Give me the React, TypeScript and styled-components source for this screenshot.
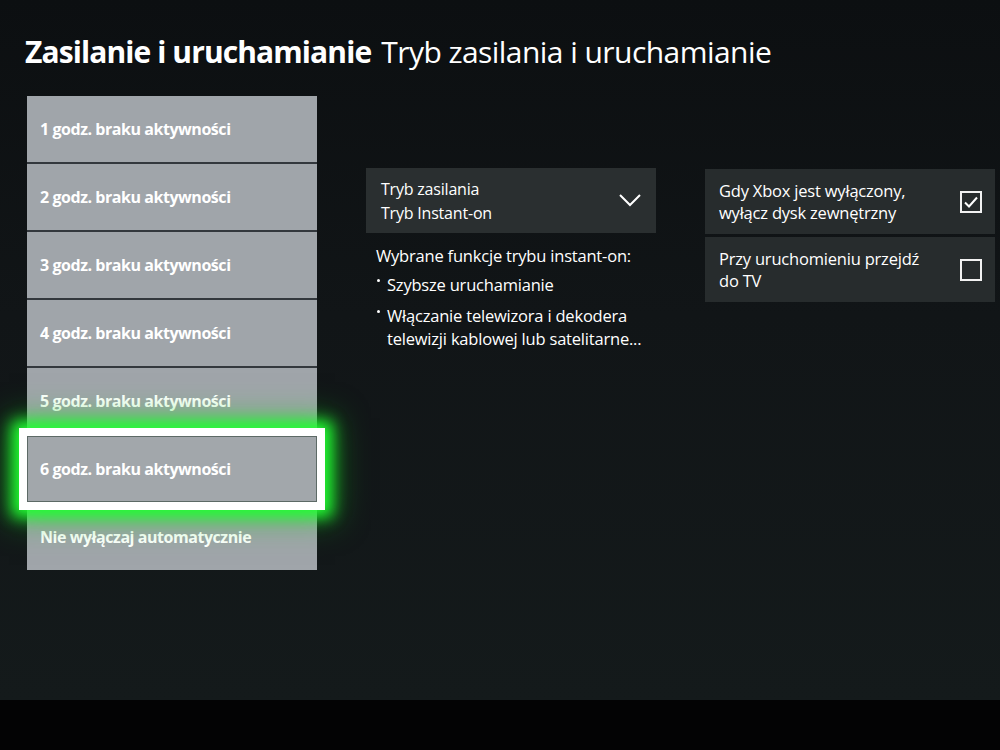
import styled, { createGlobalStyle, css } from "styled-components";

const GlobalStyle = createGlobalStyle`
  html, body {
    margin: 0;
    padding: 0;
    background: #030305;
  }
  body {
    font-family: "Open Sans", "Noto Sans", sans-serif;
    color: #ffffff;
  }
`;

const timeouts = [
  "1 godz. braku aktywności",
  "2 godz. braku aktywności",
  "3 godz. braku aktywności",
  "4 godz. braku aktywności",
  "5 godz. braku aktywności",
  "6 godz. braku aktywności",
  "Nie wyłączaj automatycznie",
];

const selectedIndex = 5;

function Chevron() {
  return (
    <svg width="22" height="13" viewBox="0 0 22 13">
      <polyline
        points="1,1 11,11 21,1"
        fill="none"
        stroke="#ffffff"
        strokeWidth="2"
      />
    </svg>
  );
}

function CheckMark() {
  return (
    <svg width="14" height="12" viewBox="0 0 14 12">
      <polyline
        points="1,6.5 5,10.5 13,1.5"
        fill="none"
        stroke="#ffffff"
        strokeWidth="2"
      />
    </svg>
  );
}

export default function App() {
  return (
    <>
      <GlobalStyle />
      <Screen>
        <Header>
          <Title>Zasilanie i uruchamianie</Title>
          <Subtitle>Tryb zasilania i uruchamianie</Subtitle>
        </Header>
        <Content>
          <List>
            {timeouts.map((label, index) => (
              <Item key={`item-${index}`} $focused={index === selectedIndex}>
                {label}
              </Item>
            ))}
          </List>

          <Middle>
            <Dropdown>
              <DropdownText>
                <div>Tryb zasilania</div>
                <div>Tryb Instant-on</div>
              </DropdownText>
              <Chevron />
            </Dropdown>
            <Info>
              <InfoTitle>Wybrane funkcje trybu instant-on:</InfoTitle>
              <Bullet>Szybsze uruchamianie</Bullet>
              <Bullet>
                Włączanie telewizora i dekodera
                <br />
                telewizji kablowej lub satelitarne...
              </Bullet>
            </Info>
          </Middle>

          <Right>
            <Option>
              <OptionText>
                Gdy Xbox jest wyłączony,
                <br />
                wyłącz dysk zewnętrzny
              </OptionText>
              <Box>
                <CheckMark />
              </Box>
            </Option>
            <Option>
              <OptionText>
                Przy uruchomieniu przejdź
                <br />
                do TV
              </OptionText>
              <Box />
            </Option>
          </Right>
        </Content>
      </Screen>
      <Bezel />
    </>
  );
}

const Screen = styled.div`
  height: 700px;
  background: linear-gradient(180deg, #0c0f11 0%, #111517 45%, #141a1b 100%);
  display: flex;
  flex-direction: column;
  overflow: hidden;
`;

const Bezel = styled.div`
  height: 50px;
  background: #030304;
`;

const Header = styled.div`
  display: flex;
  align-items: baseline;
  gap: 10px;
  padding: 34px 0 0 25px;
  height: 66px;
  box-sizing: border-box;
`;

const Title = styled.h1`
  margin: 0;
  font-size: 30px;
  font-weight: 700;
  letter-spacing: -0.9px;
  line-height: 36px;
`;

const Subtitle = styled.h2`
  margin: 0;
  font-size: 30px;
  font-weight: 400;
  letter-spacing: -0.55px;
  line-height: 36px;
`;

const Content = styled.div`
  display: flex;
  padding: 30px 0 0 27px;
  gap: 49px;
`;

const List = styled.div`
  width: 290px;
  display: flex;
  flex-direction: column;
  gap: 2px;
  background: #33383d;
`;

const Item = styled.div<{ $focused?: boolean }>`
  height: 66px;
  display: flex;
  align-items: center;
  padding-left: 13px;
  background: #a0a5aa;
  font-size: 16px;
  font-weight: 700;
  letter-spacing: -0.45px;
  color: #ffffff;

  ${(p) =>
    p.$focused &&
    css`
      position: relative;
      z-index: 1;
      background: #a2a7ab;
      box-shadow: inset 0 0 0 1px #5d6a66, 0 0 0 8px #ffffff,
        0 0 14px 15px #22ff33, 0 0 30px 18px rgba(20, 210, 30, 0.5);
    `}
`;

const Middle = styled.div`
  width: 290px;
  padding-top: 72px;
  display: flex;
  flex-direction: column;
`;

const Dropdown = styled.div`
  height: 65px;
  background: #2a2f30;
  display: flex;
  align-items: center;
  justify-content: space-between;
  padding: 0 15px 0 15px;
  box-sizing: border-box;
`;

const DropdownText = styled.div`
  font-size: 16px;
  line-height: 24px;
  letter-spacing: -0.2px;
`;

const Info = styled.div`
  padding: 11px 0 0 10px;
  font-size: 16.5px;
  letter-spacing: -0.2px;
  line-height: 23px;
`;

const InfoTitle = styled.div`
  margin-bottom: 6px;
`;

const Bullet = styled.div`
  position: relative;
  padding-left: 11px;
  margin-bottom: 8px;

  &::before {
    content: "";
    position: absolute;
    left: 1px;
    top: 6px;
    width: 3px;
    height: 3px;
    border-radius: 50%;
    background: #ffffff;
  }
`;

const Right = styled.div`
  width: 290px;
  padding-top: 73px;
  display: flex;
  flex-direction: column;
  gap: 3px;
`;

const Option = styled.div`
  height: 65px;
  background: #272c2d;
  display: flex;
  align-items: center;
  justify-content: space-between;
  padding: 0 13px 0 14px;
  box-sizing: border-box;
`;

const OptionText = styled.div`
  font-size: 16.5px;
  line-height: 22px;
  letter-spacing: -0.2px;
`;

const Box = styled.div`
  width: 18px;
  height: 18px;
  border: 2px solid #f2f2f2;
  display: flex;
  align-items: center;
  justify-content: center;
`;
